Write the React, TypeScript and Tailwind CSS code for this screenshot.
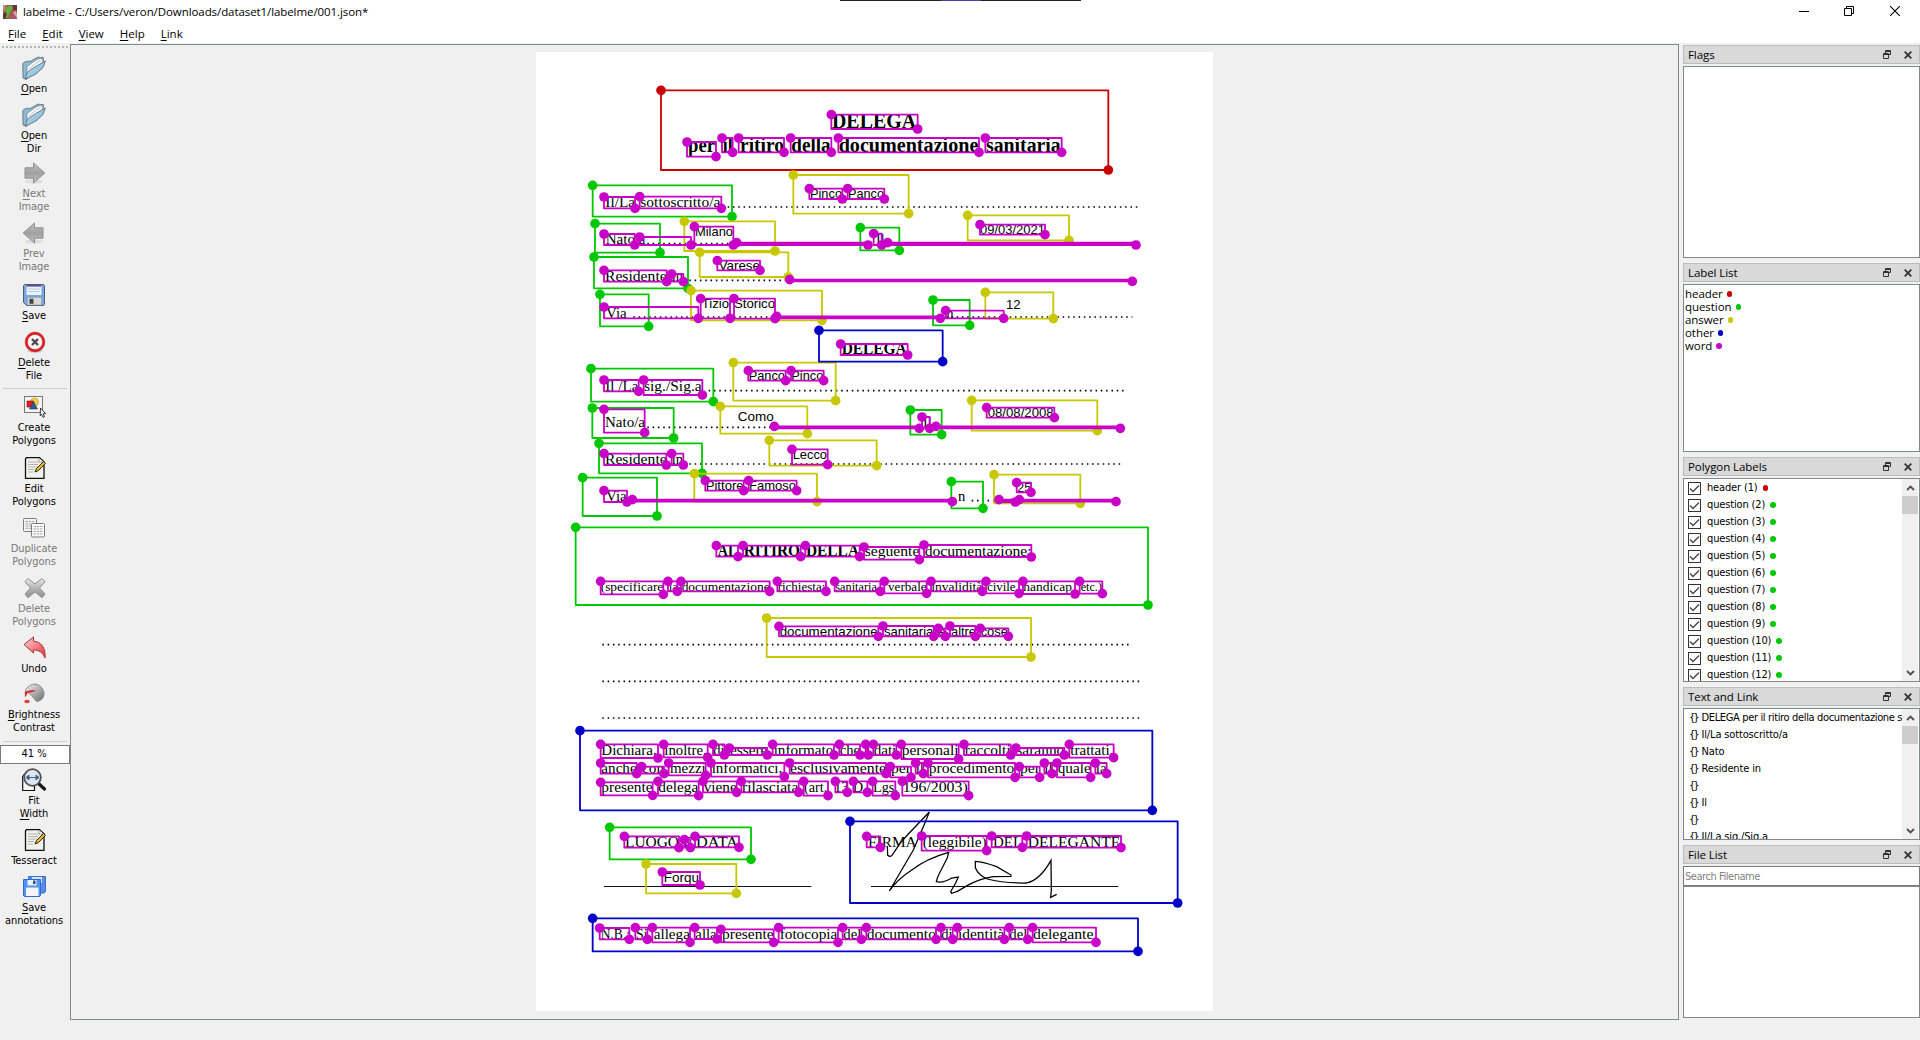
import React from "react";

/* ---------- document data (canvas units, 3 per screen pixel) ---------- */

type Box = [number, number, number, number];
type Word = [string, number, number];

const RED = "#c80000";
const GREEN = "#00c800";
const YELLOW = "#c8c800";
const BLUE = "#0000c8";
const MAGENTA = "#c800c8";

const headerBoxes: Box[] = [[393, 121, 1735, 360]];

const questionBoxes: Box[] = [
  [188, 406, 606, 500],
  [195, 521, 390, 608],
  [192, 621, 474, 715],
  [210, 733, 356, 829],
  [991, 533, 1108, 601],
  [1209, 750, 1319, 826],
  [183, 956, 550, 1055],
  [187, 1074, 431, 1164],
  [207, 1180, 516, 1270],
  [158, 1283, 381, 1398],
  [1141, 1080, 1235, 1154],
  [1264, 1295, 1359, 1375],
  [137, 1432, 1854, 1665],
  [239, 2332, 663, 2428],
];

const answerBoxes: Box[] = [
  [790, 375, 1136, 491],
  [463, 514, 735, 603],
  [509, 607, 775, 681],
  [483, 722, 876, 811],
  [1313, 496, 1617, 571],
  [1366, 727, 1570, 806],
  [610, 938, 917, 1052],
  [571, 1069, 832, 1151],
  [718, 1171, 1040, 1247],
  [493, 1271, 861, 1355],
  [1325, 1051, 1702, 1142],
  [1392, 1274, 1651, 1360],
  [710, 1704, 1503, 1821],
  [348, 2442, 619, 2530],
];

const otherBoxes: Box[] = [
  [867, 841, 1238, 935],
  [150, 2042, 1867, 2281],
  [960, 2314, 1943, 2559],
  [188, 2605, 1824, 2704],
];

const wordBoxes: Box[] = [
  [904, 194, 1163, 237],
  [471, 276, 558, 320],
  [576, 264, 608, 307],
  [626, 264, 762, 307],
  [782, 264, 904, 307],
  [925, 264, 1347, 307],
  [1366, 264, 1595, 307],
  [222, 441, 315, 475],
  [329, 440, 574, 475],
  [838, 416, 937, 447],
  [953, 416, 1063, 447],
  [222, 552, 314, 585],
  [329, 561, 483, 585],
  [493, 530, 610, 585],
  [620, 578, 1014, 585],
  [1031, 551, 1055, 585],
  [1073, 578, 1818, 585],
  [1350, 524, 1545, 554],
  [562, 632, 690, 661],
  [222, 661, 410, 695],
  [425, 672, 460, 695],
  [779, 689, 1807, 694],
  [222, 771, 505, 805],
  [512, 746, 600, 805],
  [612, 746, 735, 806],
  [740, 799, 1231, 805],
  [1247, 782, 1421, 805],
  [932, 882, 1133, 915],
  [655, 962, 767, 992],
  [783, 962, 881, 992],
  [222, 990, 326, 1024],
  [341, 990, 517, 1035],
  [222, 1078, 344, 1148],
  [733, 1129, 1168, 1135],
  [1176, 1101, 1199, 1135],
  [1218, 1129, 1771, 1135],
  [1370, 1073, 1573, 1103],
  [222, 1211, 409, 1245],
  [425, 1211, 460, 1245],
  [786, 1198, 893, 1244],
  [222, 1322, 291, 1356],
  [307, 1349, 1267, 1355],
  [526, 1292, 641, 1322],
  [656, 1292, 800, 1322],
  [1460, 1298, 1503, 1327],
  [1407, 1349, 1456, 1356],
  [1468, 1349, 1758, 1355],
  [559, 1487, 624, 1520],
  [639, 1487, 812, 1520],
  [826, 1487, 989, 1520],
  [1002, 1491, 1168, 1529],
  [1182, 1485, 1504, 1521],
  [212, 1594, 400, 1633],
  [414, 1594, 442, 1624],
  [453, 1594, 719, 1624],
  [742, 1594, 888, 1624],
  [914, 1594, 1051, 1624],
  [1063, 1594, 1190, 1630],
  [1203, 1594, 1357, 1624],
  [1368, 1594, 1467, 1630],
  [1479, 1594, 1635, 1632],
  [1649, 1594, 1717, 1631],
  [747, 1729, 1045, 1759],
  [1059, 1728, 1211, 1759],
  [1225, 1735, 1246, 1759],
  [1260, 1728, 1336, 1759],
  [1351, 1735, 1435, 1759],
  [212, 2083, 384, 2124],
  [401, 2083, 533, 2122],
  [549, 2083, 583, 2115],
  [598, 2094, 712, 2115],
  [728, 2083, 912, 2115],
  [928, 2083, 990, 2115],
  [1007, 2083, 1015, 2115],
  [1030, 2083, 1099, 2115],
  [1114, 2083, 1286, 2127],
  [1302, 2083, 1442, 2115],
  [1458, 2094, 1603, 2115],
  [1618, 2083, 1751, 2123],
  [212, 2139, 320, 2171],
  [335, 2150, 402, 2171],
  [416, 2139, 527, 2176],
  [543, 2139, 763, 2180],
  [779, 2139, 1068, 2171],
  [1081, 2150, 1143, 2182],
  [1157, 2139, 1180, 2171],
  [1194, 2139, 1455, 2182],
  [1468, 2150, 1529, 2182],
  [1543, 2139, 1566, 2171],
  [1581, 2139, 1682, 2182],
  [1696, 2139, 1730, 2171],
  [212, 2197, 368, 2236],
  [384, 2194, 506, 2237],
  [519, 2194, 620, 2227],
  [634, 2194, 806, 2227],
  [821, 2194, 894, 2237],
  [916, 2194, 952, 2227],
  [970, 2194, 1012, 2227],
  [1028, 2194, 1096, 2237],
  [1117, 2194, 1316, 2237],
  [283, 2359, 447, 2393],
  [463, 2369, 481, 2393],
  [495, 2359, 627, 2392],
  [397, 2466, 510, 2505],
  [1010, 2359, 1051, 2392],
  [1175, 2358, 1370, 2402],
  [1385, 2358, 1477, 2392],
  [1490, 2358, 1773, 2393],
  [209, 2634, 298, 2668],
  [316, 2633, 352, 2668],
  [367, 2633, 480, 2677],
  [494, 2633, 561, 2667],
  [573, 2638, 731, 2677],
  [746, 2633, 924, 2677],
  [938, 2633, 994, 2668],
  [1009, 2633, 1218, 2668],
  [1233, 2633, 1268, 2668],
  [1282, 2633, 1423, 2668],
  [1438, 2633, 1493, 2668],
  [1508, 2633, 1698, 2677],
];

interface TextRow {
  y: number;
  size: number;
  sans?: boolean;
  bold?: boolean;
  words: Word[];
}

const textRows: TextRow[] = [
  { y: 235, size: 60, bold: true, words: [["DELEGA", 906, 1158]] },
  {
    y: 305,
    size: 60,
    bold: true,
    words: [["per", 474, 555], ["il", 578, 608], ["ritiro", 630, 762], ["della", 784, 902], ["documentazione", 926, 1345], ["sanitaria", 1368, 1592]],
  },
  { y: 472, size: 45.6, words: [["Il/La", 226, 315], ["sottoscritto/a", 331, 571]] },
  { y: 444, size: 39, sans: true, words: [["Pinco", 840, 936], ["Panco", 954, 1062]] },
  { y: 583, size: 45.6, words: [["Nato", 227, 315], ["a", 328, 346], ["Il", 1038, 1064]] },
  { y: 559, size: 39, sans: true, words: [["Milano", 495, 609]] },
  { y: 552, size: 39, sans: true, words: [["09/03/2021", 1350, 1545]] },
  { y: 660, size: 39, sans: true, words: [["Varese", 566, 690]] },
  { y: 693, size: 45.6, words: [["Residente", 225, 410], ["in", 425, 459]] },
  { y: 803, size: 45.6, words: [["Via", 228, 290], ["n", 1249, 1271]] },
  { y: 775, size: 39, sans: true, words: [["Tizio", 515, 597], ["Storico", 612, 735]] },
  { y: 777, size: 39, sans: true, words: [["12", 1428, 1472]] },
  { y: 913, size: 47, bold: true, words: [["DELEGA", 935, 1130]] },
  { y: 989, size: 39, sans: true, words: [["Panco", 656, 765], ["Pinco", 784, 880]] },
  { y: 1022, size: 45.6, words: [["Il /La", 226, 325], ["sig./Sig.a", 342, 515]] },
  { y: 1132, size: 45.6, words: [["Nato/a", 225, 345], ["Il", 1179, 1205]] },
  { y: 1113, size: 39, sans: true, words: [["Como", 623, 731]] },
  { y: 1101, size: 39, sans: true, words: [["08/08/2008", 1373, 1571]] },
  { y: 1243, size: 45.6, words: [["Residente", 225, 410], ["in", 425, 459]] },
  { y: 1227, size: 39, sans: true, words: [["Lecco", 788, 891]] },
  { y: 1353, size: 45.6, words: [["Via", 228, 290], ["n", 1284, 1306]] },
  { y: 1319, size: 39, sans: true, words: [["Pittore", 527, 641], ["Famoso", 657, 798]] },
  { y: 1325, size: 39, sans: true, words: [["25", 1462, 1503]] },
  { y: 1518, size: 47, bold: true, words: [["AL", 563, 622], ["RITIRO", 641, 810], ["DELLA", 828, 987]] },
  { y: 1518, size: 45.6, words: [["seguente", 1004, 1168], ["documentazione:", 1184, 1505]] },
  {
    y: 1623,
    size: 40,
    words: [["(specificare", 212, 400], ["la", 416, 444], ["documentazione", 455, 719], ["richiesta:", 743, 886], ["sanitaria,", 916, 1050], ["verbale", 1074, 1190], ["invalidità", 1204, 1357], ["civile,", 1371, 1466], ["handicap,", 1480, 1636], ["etc.)", 1652, 1716]],
  },
  {
    y: 1757,
    size: 39,
    sans: true,
    words: [["documentazione", 749, 1043], ["sanitaria", 1062, 1210], ["e", 1225, 1247], ["altre", 1263, 1338], ["cose", 1352, 1434]],
  },
  {
    y: 2114,
    size: 45.6,
    words: [["Dichiara,", 214, 380], ["inoltre,", 403, 530], ["di", 550, 584], ["essere", 600, 712], ["informato", 731, 910], ["che", 929, 990], ["i", 1006, 1018], ["dati", 1031, 1099], ["personali", 1115, 1286], ["raccolti", 1304, 1442], ["saranno", 1459, 1603], ["trattati,", 1621, 1750]],
  },
  {
    y: 2170,
    size: 45.6,
    words: [["anche", 214, 320], ["con", 336, 402], ["mezzi", 420, 527], ["informatici,", 545, 757], ["esclusivamente", 780, 1068], ["per", 1083, 1143], ["il", 1157, 1182], ["procedimento", 1196, 1453], ["per", 1470, 1530], ["il", 1543, 1568], ["quale", 1583, 1682], ["la", 1697, 1730]],
  },
  {
    y: 2225,
    size: 45.6,
    words: [["presente", 214, 368], ["delega", 385, 505], ["viene", 521, 620], ["rilasciata", 636, 805], ["(art.", 822, 892], ["13", 912, 956], ["D.", 968, 1010], ["Lgs.", 1029, 1104], ["196/2003)", 1118, 1313]],
  },
  { y: 2390, size: 45.6, words: [["LUOGO", 285, 447], ["E", 459, 485], ["DATA", 498, 624], ["FIRMA", 1014, 1160], ["(leggibile)", 1178, 1370], ["DEL", 1389, 1476], ["DELEGANTE", 1493, 1771]] },
  { y: 2496, size: 39, sans: true, words: [["Forqu", 401, 507]] },
  {
    y: 2666,
    size: 45.6,
    words: [["N.B.:", 212, 300], ["Si", 317, 353], ["allega", 371, 480], ["alla", 496, 560], ["presente", 576, 731], ["fotocopia", 749, 922], ["del", 940, 994], ["documento", 1010, 1218], ["di", 1234, 1268], ["identità", 1284, 1423], ["del", 1438, 1492], ["delegante.", 1509, 1702]],
  },
];

const dotRows: [number, number, number][] = [
  [593, 471, 1829],
  [352, 581, 615],
  [478, 691, 765],
  [310, 801, 1807],
  [536, 1022, 1783],
  [352, 1132, 730],
  [478, 1242, 1773],
  [1325, 1352, 1394],
  [217, 1784, 1799],
  [217, 1894, 1829],
  [217, 2004, 1832],
];

const Shapes = ({ boxes, color }: { boxes: Box[]; color: string }) => (
  <g stroke={color} strokeWidth={5.4} fill="none" strokeLinejoin="round">
    {boxes.map(([x1, y1, x2, y2], i) => (
      <g key={i}>
        <rect x={x1} y={y1} width={x2 - x1} height={y2 - y1} fill={y2 - y1 < 8 ? color : "none"} />
        <circle cx={x1} cy={y1} r={14.5} fill={color} stroke="none" />
        <circle cx={x2} cy={y2} r={14.5} fill={color} stroke="none" />
      </g>
    ))}
  </g>
);

const DocumentPage = () => (
  <svg className="block h-[959px] w-[677px] bg-white" viewBox="18 6 2031 2877">
    {textRows.map((row, i) => (
      <g
        key={i}
        fontSize={row.size}
        fontFamily={row.sans ? "'Liberation Sans', sans-serif" : "'Liberation Serif', serif"}
        fontWeight={row.bold ? 700 : 400}
        fill="#000"
      >
        {row.words.map(([t, a, b], j) => (
          <text key={j} x={a} y={row.y} textLength={b - a} lengthAdjust="spacingAndGlyphs">
            {t}
          </text>
        ))}
      </g>
    ))}
    {dotRows.map(([a, y, b], i) => (
      <line key={i} x1={a} x2={b} y1={y} y2={y} stroke="#000" strokeWidth={4.8} strokeDasharray="4.6 11.3" />
    ))}
    <path d="M222 2509.500H844M1023 2509.500H1765" stroke="#111" strokeWidth={3} />
    <path
      d="M1072 2388L1073 2416Q1080 2422 1086 2416L1110 2380 1135 2352 1198 2286 1180 2330 1150 2400 1078 2523Q1100 2490 1142 2462 1190 2425 1256 2407L1252 2423 1235 2457Q1222 2480 1219 2495 1240 2500 1265 2484L1285 2481 1278 2497 1262 2525 1265 2530 1282 2524 1318 2503Q1350 2487 1390 2480L1443 2479 1443 2475 1400 2450Q1360 2435 1336 2434L1336 2453Q1345 2475 1372 2487 1420 2500 1490 2499 1530 2490 1563 2431L1564 2520 1562 2542 1580 2533"
      fill="none"
      stroke="#000"
      strokeWidth={3.8}
    />
    <Shapes boxes={headerBoxes} color={RED} />
    <Shapes boxes={questionBoxes} color={GREEN} />
    <Shapes boxes={answerBoxes} color={YELLOW} />
    <Shapes boxes={otherBoxes} color={BLUE} />
    <Shapes boxes={wordBoxes} color={MAGENTA} />
  </svg>
);

/* ---------- toolbar icons ---------- */

const Svg = ({ children }: { children: React.ReactNode }) => (
  <svg className="block h-6 w-6" viewBox="0 0 24 24" fill="none">
    {children}
  </svg>
);

const FolderIcon = () => (
  <Svg>
    <defs>
      <linearGradient id="folder" x1="0" y1="0" x2="1" y2="1">
        <stop offset="0" stopColor="#d4ecf8" />
        <stop offset="1" stopColor="#6aa6c8" />
      </linearGradient>
    </defs>
    <path d="M.8 7.5L2 6.3 6.5 5 8 5.6 16 1l3 .8 2.2-.6.3 3.6L5 23.2 1 22z" fill="#8ebbd3" stroke="#5d7482" strokeWidth=".9" />
    <path d="M5 10.5L14 4l5-2 2 2.5-2 6L5 20z" fill="#f6f8f9" stroke="#7d8990" strokeWidth=".8" />
    <path d="M7 13l8-6.5 4-2" stroke="#a8b0b5" strokeWidth=".8" />
    <path d="M3 23.3L5.5 16 15 9.8 23.4 5 21 11.5 14 18z" fill="url(#folder)" stroke="#56717f" strokeWidth=".9" />
  </Svg>
);

const ArrowIcon = ({ left }: { left?: boolean }) => (
  <Svg>
    <defs>
      <linearGradient id="arrow" x1="0" y1="0" x2="0" y2="1">
        <stop offset="0" stopColor="#c2c2c2" />
        <stop offset=".5" stopColor="#a0a0a0" />
        <stop offset="1" stopColor="#c4c4c4" />
      </linearGradient>
    </defs>
    <ellipse cx="12" cy="20.5" rx="9" ry="2" fill="#dedede" />
    <path
      d={left ? "M1.2 12L12.5 2v4.8H21v10.4h-8.500V22z" : "M22.800 12L11.500 2v4.800H3v10.400h8.500V22z"}
      fill="url(#arrow)"
      stroke="#8e8e8e"
      strokeWidth="1"
    />
  </Svg>
);

const SaveIcon = () => (
  <Svg>
    <path d="M2.500 1.500h19l1 1v19l-1 1h-17l-3-3v-17z" fill="#79a5e0" stroke="#4c5f77" />
    <path d="M4.500 2h15v10h-15z" fill="#eaf3f8" />
    <path d="M4.500 2h15v1.600h-15z" fill="#5c4f9d" />
    <path d="M6 6h12M6 8.500h12" stroke="#b9cfda" />
    <path d="M5.500 14.500h14V22h-14z" fill="#d8dad8" stroke="#8d9ba8" strokeWidth=".6" />
    <path d="M7.500 15.800h4v5h-4z" fill="#3f4446" />
  </Svg>
);

const DeleteFileIcon = () => (
  <Svg>
    <ellipse cx="13" cy="21" rx="8" ry="1.800" fill="#cfcfcf" />
    <circle cx="13" cy="12" r="8.600" fill="#f4f4f4" stroke="#e02128" strokeWidth="2.600" />
    <circle cx="13" cy="12" r="9.900" stroke="#a8151b" strokeWidth=".5" />
    <path d="M10 9l6 6M16 9l-6 6" stroke="#4a4a4a" strokeWidth="2.400" />
  </Svg>
);

const CreateIcon = () => (
  <Svg>
    <rect x="2.500" y="1.500" width="18" height="16" fill="#f3f3f0" stroke="#000" strokeDasharray="1 1" />
    <circle cx="12.500" cy="7" r="4" fill="#f3cd4c" stroke="#c79a1c" strokeWidth=".6" />
    <rect x="5" y="6" width="6.500" height="6" fill="#e01f26" stroke="#8f1015" strokeWidth=".6" />
    <path d="M11.500 6.500L15.500 14h-8z" fill="#33599a" stroke="#1d3563" strokeWidth=".6" />
    <path d="M18.500 13l5 5.500-2.200.2 1.200 3-1.500.6-1.300-3-1.500 1.500z" fill="#fff" stroke="#222" strokeWidth=".9" />
  </Svg>
);

const EditIcon = () => (
  <Svg>
    <path d="M4.500 1.700h13l4.500 4v16.600H3.500V2.700z" fill="#f1f1ee" stroke="#111" strokeWidth="1.300" />
    <path d="M17 2v4h4.500" fill="#fff" stroke="#777" strokeWidth=".7" />
    <path d="M6 6h10M6 8.500h10M6 11h9M6 13.500h6M6 16h5" stroke="#b2b2b2" />
    <path d="M13 16l1.500-3.500L21.500 5.500l2 1.800-7 7.200z" fill="#e8b730" stroke="#2b2205" strokeWidth="1" />
  </Svg>
);

const DuplicateIcon = () => (
  <Svg>
    <rect x="1.500" y="2.500" width="13" height="13" rx="1" fill="#f4f4f4" stroke="#7d7d7d" />
    <path d="M3.500 5.500h9M3.500 7.800h9M3.500 10h9M3.500 12.300h9" stroke="#a5a5a5" strokeDasharray="2.500 .7" />
    <rect x="9.500" y="7.500" width="13" height="13.500" rx="1" fill="#fafafa" stroke="#7d7d7d" />
    <path d="M11.500 10.500h9M11.500 13h9M11.500 15.500h9M11.500 18h9" stroke="#a5a5a5" strokeDasharray="2.500 .7" />
  </Svg>
);

const DeleteIcon = () => (
  <Svg>
    <defs>
      <linearGradient id="cross" x1="0" y1="0" x2="0" y2="1">
        <stop offset="0" stopColor="#ededed" />
        <stop offset=".5" stopColor="#b4b4b4" />
        <stop offset="1" stopColor="#909090" />
      </linearGradient>
    </defs>
    <path
      d="M6 2.500L13 8l7-5.500 3 3.300L17.500 12l5.500 6-3 3.700L13 16l-7 5.700-3-3.700 5.500-6L3 5.800z"
      fill="url(#cross)"
      stroke="#8c8c8c"
      strokeLinejoin="round"
    />
  </Svg>
);

const UndoIcon = () => (
  <Svg>
    <defs>
      <linearGradient id="undo" x1="0" y1="0" x2="1" y2="1">
        <stop offset="0" stopColor="#fbd5d6" />
        <stop offset="1" stopColor="#e9303a" />
      </linearGradient>
    </defs>
    <path d="M2 8.500L11.500 1v4.200C19 5.500 24 12 23 22c-2-5.500-6-8-11.500-8v3z" fill="url(#undo)" stroke="#a3353a" strokeLinejoin="round" />
  </Svg>
);

const BrightnessIcon = () => (
  <Svg>
    <defs>
      <linearGradient id="bucket" x1="0" y1="0" x2="1" y2="1">
        <stop offset="0" stopColor="#f4f4f4" />
        <stop offset="1" stopColor="#6c6c6c" />
      </linearGradient>
    </defs>
    <path d="M3 9.500C5 4.500 9 2 14 2c5 1 8 6 8 10 0 4-3.500 7-7 7.500-3-1.500-4-7-12-10z" fill="url(#bucket)" stroke="#777" strokeWidth=".8" />
    <path d="M3 10c3-1.800 7-2 11-1.800-3 2-6 2.300-8 2.600-1.500.8-1.500 3-2.300 4.500C3 14 2.500 12 3 10z" fill="#d81e22" />
    <ellipse cx="5" cy="19.500" rx="2.800" ry="1.700" fill="#e23b3f" />
  </Svg>
);

const FitWidthIcon = () => (
  <Svg>
    <path d="M3 5.500L.7 8.500V22.500h11.800V17" fill="#f7f7f7" stroke="#111" strokeWidth="1.200" />
    <path d="M16.500 15.500l6 5.500" stroke="#161616" strokeWidth="3.200" strokeLinecap="round" />
    <circle cx="10.500" cy="9.500" r="8.300" fill="#dfe5ea" stroke="#4e5254" strokeWidth="1.800" />
    <path d="M6 9.500h9M7 7l-3 2.500L7 12zM14 7l3 2.500-3 2.500z" fill="#38658f" stroke="#38658f" strokeWidth="1" />
  </Svg>
);

const SaveAllIcon = () => (
  <Svg>
    <path d="M6.500 1.500h17v15l-1.500 1.500h-15z" fill="#5b8be0" stroke="#3d6fd0" />
    <path d="M10 2h10v6H10z" fill="#d6e4fa" />
    <path d="M1.500 4.500h17v16l-1 1h-15l-1-1z" fill="#4f94f0" stroke="#2f6ad0" />
    <path d="M5.500 5h9v5.500h-9z" fill="#eaf2fd" />
    <path d="M11 5.500h2.500V9H11z" fill="#3d4a7c" />
    <path d="M4 12.500h12.500V21H4z" fill="#f3f3fb" />
  </Svg>
);

/* ---------- toolbar ---------- */

const U = ({ children }: { children: React.ReactNode }) => <span className="underline decoration-1 underline-offset-[2px]">{children}</span>;

interface Tool {
  icon: React.ReactNode;
  label: React.ReactNode[];
  height: string;
  disabled?: boolean;
}

const toolGroups: Tool[][] = [
  [
    { icon: <FolderIcon />, label: [<><U>O</U>pen</>], height: "h-[47px]" },
    { icon: <FolderIcon />, label: [<><U>O</U>pen</>, "Dir"], height: "h-[58px]" },
    { icon: <ArrowIcon />, label: [<><U>N</U>ext</>, "Image"], height: "h-[60px]", disabled: true },
    { icon: <ArrowIcon left />, label: [<><U>P</U>rev</>, "Image"], height: "h-[62px]", disabled: true },
    { icon: <SaveIcon />, label: [<><U>S</U>ave</>], height: "h-[47px]" },
    { icon: <DeleteFileIcon />, label: [<><U>D</U>elete</>, "File"], height: "h-[58px]" },
  ],
  [
    { icon: <CreateIcon />, label: ["Create", "Polygons"], height: "h-[61px]" },
    { icon: <EditIcon />, label: ["Edit", "Polygons"], height: "h-[60px]" },
    { icon: <DuplicateIcon />, label: ["Duplicate", "Polygons"], height: "h-[60px]", disabled: true },
    { icon: <DeleteIcon />, label: ["Delete", "Polygons"], height: "h-[60px]", disabled: true },
    { icon: <UndoIcon />, label: ["Undo"], height: "h-[46px]" },
    { icon: <BrightnessIcon />, label: [<><U>B</U>rightness</>, "Contrast"], height: "h-[59px]" },
  ],
  [
    { icon: <FitWidthIcon />, label: ["Fit", <><U>W</U>idth</>], height: "h-[60px]" },
    { icon: <EditIcon />, label: ["Tesseract"], height: "h-[47px]" },
    { icon: <SaveAllIcon />, label: [<><U>S</U>ave</>, "annotations"], height: "h-[58px]" },
  ],
];

const ToolButton = ({ tool }: { tool: Tool }) => (
  <div className={`flex flex-col items-center ${tool.height}`}>
    {tool.icon}
    <div className={`mt-[2px] text-center leading-[13px] tracking-[-0.050px] ${tool.disabled ? "text-[#787878]" : "text-black"}`}>
      {tool.label.map((line, i) => (
        <div key={i}>{line}</div>
      ))}
    </div>
  </div>
);

const Toolbar = () => (
  <div className="flex w-[70px] shrink-0 flex-col">
    <div className="mx-[2px] mt-[2px] h-[2px] bg-[repeating-linear-gradient(90deg,#b8b8b8_0_2px,transparent_2px_4px)]" />
    <div className="flex flex-col pr-[2px] pt-2">
      {toolGroups[0].map((t, i) => (
        <ToolButton key={i} tool={t} />
      ))}
    </div>
    <div className="mx-[3px] h-px bg-[#cdcdcd]" />
    <div className="flex flex-col pr-[2px] pt-[6px]">
      {toolGroups[1].map((t, i) => (
        <ToolButton key={i} tool={t} />
      ))}
    </div>
    <div className="mx-[3px] h-px bg-[#cdcdcd]" />
    <div className="mt-[3px] flex h-[19px] items-center justify-center border border-[#7a7a7a] bg-white pr-[2px]">41 %</div>
    <div className="flex flex-col pr-[2px] pt-[4px]">
      {toolGroups[2].map((t, i) => (
        <ToolButton key={i} tool={t} />
      ))}
    </div>
  </div>
);

/* ---------- docks ---------- */

const DockTitle = ({ title }: { title: string }) => (
  <div className="flex h-[19px] shrink-0 items-center border border-[#bcbcbc] bg-[#d9d9d9] pl-1 pr-[7px] font-['Open_Sans',sans-serif] text-[11.500px]">
    <span className="flex-1 pt-px tracking-[-0.080px]">{title}</span>
    <svg className="mr-[13px] h-[9px] w-[8px]" viewBox="0 0 8 9" fill="none" stroke="#333">
      <path d="M2.500 3V.5h5v4H5.500M2.500 1.500h5M.5 3.500h5v5h-5zM.5 4.500h5" />
    </svg>
    <svg className="h-[8px] w-[8px]" viewBox="0 0 8 8" stroke="#333" strokeWidth="1.800">
      <path d="M.7 .7l6.600 6.600M7.300 .7L.7 7.300" />
    </svg>
  </div>
);

const ScrollBar = () => (
  <div className="mr-px flex w-[16px] shrink-0 flex-col items-center bg-[#f0f0f0]">
    <svg className="h-[17px] w-[9px]" viewBox="0 0 9 17" fill="none" stroke="#505050" strokeWidth="1.800">
      <path d="M1 11l3.500-3.500L8 11" />
    </svg>
    <div className="h-[18px] w-full bg-[#cdcdcd]" />
    <div className="flex-1" />
    <svg className="h-[17px] w-[9px]" viewBox="0 0 9 17" fill="none" stroke="#505050" strokeWidth="1.800">
      <path d="M1 7l3.500 3.500L8 7" />
    </svg>
  </div>
);

const labels: [string, string][] = [
  ["header", "bg-[#c80000]"],
  ["question", "bg-[#00c800]"],
  ["answer", "bg-[#c8c800]"],
  ["other", "bg-[#0000c8]"],
  ["word", "bg-[#c800c8]"],
];

const polygonLabels = Array.from({ length: 12 }, (_, i) => (i === 0 ? "header (1)" : `question (${i + 1})`));

const texts = ["DELEGA per il ritiro della documentazione sanitaria", "Il/La sottoscritto/a", "Nato", "Residente in", "", "Il", "", "Il/La sig./Sig.a"];

const FRAME = "overflow-hidden border border-[#828790] bg-white";

const Docks = () => (
  <div className="ml-[4px] flex w-[237px] shrink-0 flex-col pt-px">
    <DockTitle title="Flags" />
    <div className={`mt-[2px] h-[192px] shrink-0 ${FRAME}`} />

    <div className="h-[5px] shrink-0" />
    <DockTitle title="Label List" />
    <div className={`mt-[2px] h-[168px] shrink-0 pl-px pt-[2px] font-['Open_Sans',sans-serif] text-[11.500px] leading-[13px] tracking-[-0.060px] ${FRAME}`}>
      {labels.map(([name, dot]) => (
        <div key={name} className="flex h-[13px] items-center">
          {name}
          <span className={`ml-[4px] mt-px size-[5.500px] rounded-full ${dot}`} />
        </div>
      ))}
    </div>

    <div className="h-[5px] shrink-0" />
    <DockTitle title="Polygon Labels" />
    <div className={`mt-[2px] flex h-[204px] shrink-0 ${FRAME}`}>
      <div className="flex-1 overflow-hidden pl-1 pt-px tracking-[-0.150px]">
        {polygonLabels.map((name, i) => (
          <div key={name} className="flex h-[17px] items-center">
            <svg className="h-[13px] w-[13px]" viewBox="0 0 13 13" fill="none">
              <rect x=".5" y=".5" width="12" height="12" fill="#fff" stroke="#333" />
              <path d="M2 6.500l3 3L11 3.500" stroke="#444" strokeWidth="1.300" />
            </svg>
            <span className="ml-[6px]">{name}</span>
            <span className={`-mt-px ml-[5px] size-[5.500px] rounded-full ${i === 0 ? "bg-[#c80000]" : "bg-[#00c800]"}`} />
          </div>
        ))}
      </div>
      <ScrollBar />
    </div>

    <div className="h-[5px] shrink-0" />
    <DockTitle title="Text and Link" />
    <div className={`mt-[2px] flex h-[132px] shrink-0 ${FRAME}`}>
      <div className="w-[218px] overflow-hidden pl-[5px]">
        {texts.map((t, i) => (
          <div key={i} className="flex h-[17px] whitespace-pre leading-[17px]">
            <span className="w-[12.500px] shrink-0 tracking-[-2px]">{"{}"}</span>
            <span className={i === 0 ? "tracking-[-0.350px]" : "tracking-[-0.150px]"}>{t}</span>
          </div>
        ))}
      </div>
      <ScrollBar />
    </div>

    <div className="h-[5px] shrink-0" />
    <DockTitle title="File List" />
    <div className="mt-[2px] flex h-[20px] shrink-0 items-center border border-[#7a7a7a] bg-white pl-px pt-[2px] tracking-[-0.450px] text-[#7f7f7f]">
      Search Filename
    </div>
    <div className={`h-[132px] shrink-0 ${FRAME}`} />
  </div>
);

/* ---------- window chrome ---------- */

const TitleBar = () => (
  <div className="relative flex h-[22px] shrink-0 items-center bg-white">
    <div className="absolute left-[840px] top-0 flex h-px w-[241px] bg-[#222]">
      <div className="mx-auto w-[40px] bg-[#4a3fb0]" />
    </div>
    <svg className="ml-[3px] mt-[1px] h-[14px] w-[14px]" viewBox="0 0 14 14">
      <rect width="14" height="14" fill="#a8585a" />
      <path d="M9 0h5v5l-3 3zM0 9l3-2 2 7H0z" fill="#6b3038" />
      <path d="M10 8l2-3 2 4v4z" fill="#d9a9a0" />
      <path d="M3 2.500L7 1l3 .5-1 3-2 2-1 3-1.500 4H2.500L4 9 2 6z" fill="#5cb83a" />
      <path d="M0 0h3L2 4 0 6z" fill="#c98b86" />
    </svg>
    <span className="ml-[6px] mt-px text-[11.500px] leading-[16px] tracking-[-0.080px]">
      labelme - C:/Users/veron/Downloads/dataset1/labelme/001.json*
    </span>
    <div className="ml-auto flex items-center pr-[20px]">
      <div className="mr-[35px] h-px w-[10px] bg-black" />
      <svg className="mr-[36px] h-[10px] w-[10px]" viewBox="0 0 10 10" fill="none" stroke="#000">
        <path d="M.5 2.500h7v7h-7zM2.500 2.500v-2h7v7h-2" />
      </svg>
      <svg className="h-[10px] w-[10px]" viewBox="0 0 10 10" stroke="#000" strokeWidth="1.100">
        <path d="M0 0l10 10M10 0L0 10" />
      </svg>
    </div>
  </div>
);

const MenuBar = () => (
  <div className="flex h-[21px] shrink-0 items-center gap-[16px] bg-white pl-2 pt-[2px] text-[11.500px]">
    {["File", "Edit", "View", "Help", "Link"].map((m) => (
      <span key={m}>
        <U>{m[0]}</U>
        {m.slice(1)}
      </span>
    ))}
  </div>
);

export default function App() {
  return (
    <div className="flex h-[1040px] w-[1920px] flex-col overflow-hidden bg-[#f0f0f0] text-black">
      <div className="flex flex-col font-['Open_Sans',sans-serif]">
        <TitleBar />
        <MenuBar />
      </div>
      <div className="flex h-[977px] shrink-0 pt-px font-['DejaVu_Sans_Condensed','Noto_Sans',sans-serif] text-[11px]">
        <Toolbar />
        <div className="flex w-[1609px] shrink-0 border border-[#828790] pl-[465px] pt-[7px]">
          <DocumentPage />
        </div>
        <Docks />
      </div>
    </div>
  );
}
